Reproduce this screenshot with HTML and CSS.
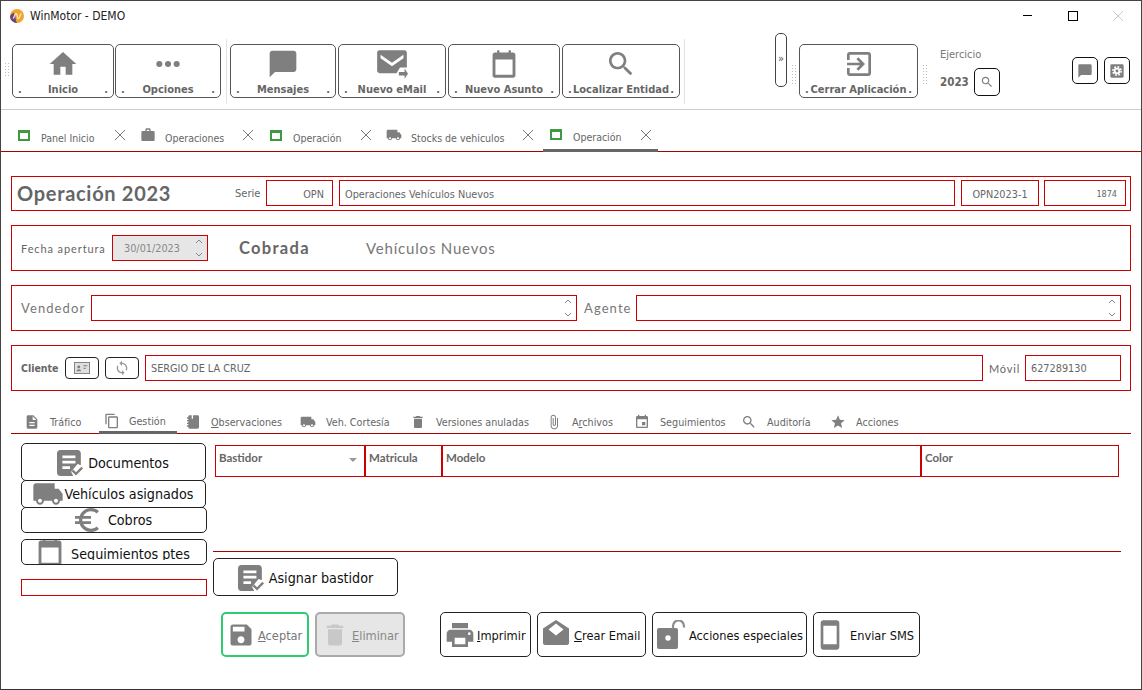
FILE: index.html
```html
<!DOCTYPE html>
<html lang="es">
<head>
    <meta charset="utf-8">
    <title>WinMotor - DEMO</title>
    <link rel="stylesheet" href="styles.css">
</head>
<body>
    <svg class="sprite" xmlns="http://www.w3.org/2000/svg">
        <symbol id="i-home" viewBox="0 0 24 24"><path d="M10 20v-6h4v6h5v-8h3L12 3 2 12h3v8z"/></symbol>
        <symbol id="i-dots" viewBox="0 0 24 24"><circle cx="5.500" cy="12" r="2.300"/><circle cx="12" cy="12" r="2.300"/><circle cx="18.500" cy="12" r="2.300"/></symbol>
        <symbol id="i-chat" viewBox="0 0 24 24"><path d="M20 2H4c-1.100 0-2 .9-2 2v18l4-4h14c1.100 0 2-.9 2-2V4c0-1.100-.9-2-2-2z"/></symbol>
        <symbol id="i-mail" viewBox="0 0 28 28"><path d="M3 2h22c1.100 0 2 .9 2 2v13h-6l-3 5H3c-1.100 0-2-.9-2-2V4c0-1.100.9-2 2-2zm11 11L4 6v3l10 7 10-7V6z"/><path d="M20 24h5v3l3-4.500L25 18v3h-5z"/></symbol>
        <symbol id="i-cal" viewBox="-2 -2 28 28"><path d="M6 0h2v2h8V0h2v2h2c1.100 0 2 .9 2 2v18c0 1.100-.9 2-2 2H4c-1.100 0-2-.9-2-2V4c0-1.100.9-2 2-2h2zM4.500 8v13.500h15V8z"/></symbol>
        <symbol id="i-search" viewBox="0 0 24 24"><path d="M15.500 14h-.79l-.28-.27C15.410 12.590 16 11.110 16 9.500 16 5.910 13.090 3 9.500 3S3 5.910 3 9.500 5.910 16 9.500 16c1.610 0 3.090-.59 4.230-1.570l.27.28v.79l5 4.990L20.490 19l-4.990-5zm-6 0C7.010 14 5 11.990 5 9.500S7.010 5 9.500 5 14 7.010 14 9.500 11.990 14 9.500 14z"/></symbol>
        <symbol id="i-exit" viewBox="0 0 24 24"><path d="M10.090 15.590L11.500 17l5-5-5-5-1.410 1.410L12.670 11H3v2h9.670l-2.580 2.590zM19 3H5c-1.110 0-2 .9-2 2v4h2V5h14v14H5v-4H3v4c0 1.100.89 2 2 2h14c1.100 0 2-.9 2-2V5c0-1.100-.9-2-2-2z"/></symbol>
        <symbol id="i-work" viewBox="0 0 24 24"><path d="M20 6h-4V4c0-1.110-.89-2-2-2h-4c-1.110 0-2 .89-2 2v2H4c-1.110 0-1.990.89-1.990 2L2 19c0 1.110.89 2 2 2h16c1.110 0 2-.89 2-2V8c0-1.110-.89-2-2-2zm-6 0h-4V4h4v2z"/></symbol>
        <symbol id="i-truck" viewBox="0 0 24 24"><path d="M20 8h-3V4H3c-1.100 0-2 .9-2 2v11h2c0 1.660 1.340 3 3 3s3-1.340 3-3h6c0 1.660 1.340 3 3 3s3-1.340 3-3h2v-5l-3-4zM6 18.500c-.83 0-1.500-.67-1.500-1.500s.67-1.500 1.500-1.500 1.500.67 1.500 1.500-.67 1.500-1.500 1.500zm12 0c-.83 0-1.500-.67-1.500-1.500s.67-1.500 1.500-1.500 1.500.67 1.500 1.500-.67 1.500-1.500 1.500z"/></symbol>
        <symbol id="i-file" viewBox="0 0 24 24"><path d="M14 2H6c-1.100 0-2 .9-2 2v16c0 1.100.9 2 2 2h12c1.100 0 2-.9 2-2V8l-6-6zm2 16H8v-2h8v2zm0-4H8v-2h8v2zm-3-5V3.500L18.500 9H13z"/></symbol>
        <symbol id="i-copy" viewBox="0 0 24 24"><path d="M16 1H4c-1.100 0-2 .9-2 2v14h2V3h12V1zm3 4H8c-1.100 0-2 .9-2 2v14c0 1.100.9 2 2 2h11c1.100 0 2-.9 2-2V7c0-1.100-.9-2-2-2zm0 16H8V7h11v14z"/></symbol>
        <symbol id="i-note" viewBox="0 0 24 24"><path d="M7 2h3v5h2V2h7c1.100 0 2 .9 2 2v16c0 1.100-.9 2-2 2H7c-1.100 0-2-.9-2-2v-1H3v-2h2v-2H3v-2h2v-2H3V9h2V7H3V5h2V4c0-1.100.9-2 2-2z"/></symbol>
        <symbol id="i-trash" viewBox="0 0 24 24"><path d="M6 19c0 1.100.9 2 2 2h8c1.100 0 2-.9 2-2V7H6v12zM19 4h-3.500l-1-1h-5l-1 1H5v2h14V4z"/></symbol>
        <symbol id="i-clip" viewBox="0 0 24 24"><path d="M16.500 6v11.500c0 2.210-1.790 4-4 4s-4-1.790-4-4V5c0-1.380 1.120-2.500 2.500-2.500s2.500 1.120 2.500 2.500v10.500c0 .55-.45 1-1 1s-1-.45-1-1V6H10v9.500c0 1.380 1.120 2.500 2.500 2.500s2.500-1.120 2.500-2.500V5c0-2.210-1.790-4-4-4S7 2.790 7 5v12.500c0 3.040 2.460 5.500 5.500 5.500s5.500-2.460 5.500-5.500V6h-1.500z"/></symbol>
        <symbol id="i-event" viewBox="0 0 24 24"><path d="M17 12h-5v5h5v-5zM16 1v2H8V1H6v2H5c-1.110 0-1.990.9-1.990 2L3 19c0 1.100.89 2 2 2h14c1.100 0 2-.9 2-2V5c0-1.100-.9-2-2-2h-1V1h-2zm3 18H5V8h14v11z"/></symbol>
        <symbol id="i-star" viewBox="0 0 24 24"><path d="M12 17.270L18.180 21l-1.640-7.030L22 9.240l-7.190-.61L12 2 9.190 8.630 2 9.240l5.460 4.730L5.820 21z"/></symbol>
        <symbol id="i-doc" viewBox="0 0 24 24"><path d="M3 0h16c1.700 0 3 1.300 3 3v11l-3-1-5 6-1 1 2 4H3c-1.700 0-3-1.300-3-3V3c0-1.700 1.300-3 3-3zm2 5v2.500h12V5zm0 5v2.500h12V10zm0 5v2.500h7V15z"/><path d="M13.500 19.500l1.500-1.500 2.500 2.500 5-5 1.500 1.500-6.500 6.500z"/></symbol>
        <symbol id="i-euro" viewBox="0 0 24 24"><path d="M15 18.500c-2.510 0-4.680-1.420-5.760-3.500H15v-2H8.580c-.05-.33-.08-.66-.08-1s.03-.67.08-1H15V9H9.240C10.320 6.920 12.500 5.500 15 5.500c1.610 0 3.090.59 4.230 1.570L21 5.300C19.410 3.870 17.300 3 15 3c-3.920 0-7.240 2.510-8.480 6H3v2h3.060c-.04.33-.06.66-.06 1s.2.670.06 1H3v2h3.520c1.240 3.490 4.560 6 8.480 6 2.310 0 4.410-.87 6-2.300l-1.780-1.770c-1.130.98-2.600 1.570-4.220 1.570z"/></symbol>
        <symbol id="i-save" viewBox="0 0 24 24"><path d="M17 3H5c-1.110 0-2 .9-2 2v14c0 1.100.89 2 2 2h14c1.100 0 2-.9 2-2V7l-4-4zm-5 16c-1.660 0-3-1.340-3-3s1.340-3 3-3 3 1.340 3 3-1.340 3-3 3zm3-10H5V5h10v4z"/></symbol>
        <symbol id="i-print" viewBox="0 0 24 24"><path d="M19 8H5c-1.660 0-3 1.340-3 3v6h4v4h12v-4h4v-6c0-1.660-1.340-3-3-3zm-3 11H8v-5h8v5zm3-7c-.55 0-1-.45-1-1s.45-1 1-1 1 .45 1 1-.45 1-1 1zm-1-9H6v4h12V3z"/></symbol>
        <symbol id="i-open" viewBox="0 0 30 30"><path fill-rule="evenodd" d="M15 0L28 8.500V23c0 1.100-.9 2-2 2H4c-1.100 0-2-.9-2-2V8.500zM15 3.500L7.500 9.500 15 15.500 22.500 9.500z"/></symbol>
        <symbol id="i-lock" viewBox="0 0 30 30"><rect x="1" y="8" width="21" height="21" rx="2"/><circle cx="12" cy="18" r="2.700" fill="#fff"/><path d="M17 9V6a5 5 0 0 1 11 0v1.500" fill="none" stroke="#8c8c8c" stroke-width="2.200"/></symbol>
        <symbol id="i-phone" viewBox="0 0 24 24"><path d="M17 1.010L7 1c-1.100 0-2 .9-2 2v18c0 1.100.9 2 2 2h10c1.100 0 2-.9 2-2V3c0-1.100-.9-1.990-2-1.990zM17 19H7V5h10v14z"/></symbol>
        <symbol id="i-card" viewBox="0 0 24 18"><rect x="0.700" y="0.700" width="22.600" height="16.600" fill="#e0e0e0" stroke="#7f7f7f" stroke-width="1.400"/><path d="M3.500 14c.3-2.200 1.600-3.200 3.700-3.200s3.400 1 3.700 3.200z"/><circle cx="7.200" cy="7.500" r="2.200"/><path d="M14 5h6v1.500h-6zm0 3.500h4V10h-4z"/></symbol>
        <symbol id="i-sync" viewBox="0 0 24 24"><path d="M12 4V1L8 5l4 4V6c3.310 0 6 2.690 6 6 0 1.010-.25 1.970-.7 2.800l1.460 1.460C19.540 15.030 20 13.570 20 12c0-4.420-3.580-8-8-8zm0 14c-3.310 0-6-2.690-6-6 0-1.010.25-1.970.7-2.800L5.240 7.740C4.460 8.970 4 10.430 4 12c0 4.420 3.580 8 8 8v3l4-4-4-4v3z"/></symbol>
        <symbol id="i-gear" viewBox="0 0 24 24"><rect x="2" y="2" width="20" height="20" rx="2"/><circle cx="12" cy="12" r="5" fill="#fff"/><circle cx="12" cy="12" r="6.200" fill="none" stroke="#fff" stroke-width="2.400" stroke-dasharray="2.600 2.270"/><circle cx="12" cy="12" r="2.200"/></symbol>
        <symbol id="i-x" viewBox="0 0 10 10"><path d="M0 0l10 10M10 0L0 10" fill="none" stroke="#777" stroke-width="1"/></symbol>
        <symbol id="i-spin" viewBox="0 0 10 20"><path d="M2 5l3-3 3 3M2 15l3 3 3-3" fill="none" stroke="#888" stroke-width="1"/></symbol>
    </svg>

    <div class="window">
        <div class="titlebar">
            <svg class="app-logo" viewBox="0 0 14 14"><circle cx="7" cy="7" r="7" fill="#f2a52e"/><path d="M0 7a7 7 0 0 0 7 7c-2-3-1-7-3-10.300A7 7 0 0 0 0 7z" fill="#5f4590"/><path d="M3 9.500c1.500-1 1.500-5 3-5s1 5 2.500 5 1.500-4 2.500-5" fill="none" stroke="#ffe9b8" stroke-width="1.300"/></svg>
            <span class="app-name">WinMotor - DEMO</span>
            <div class="win-controls">
                <span class="win-min"></span>
                <span class="win-max"></span>
                <svg class="win-close" viewBox="0 0 10 10"><path d="M0 0l10 10M10 0L0 10" stroke="#ccc" stroke-width="1"/></svg>
            </div>
        </div>

        <div class="toolbar">
            <span class="grip"></span>
            <div class="tool-group">
                <a class="tool w-inicio"><svg class="tool-icon"><use href="#i-home"/></svg><span class="tool-label"><i>.</i><b>Inicio</b><i>.</i></span></a>
                <a class="tool w-opciones"><svg class="tool-icon"><use href="#i-dots"/></svg><span class="tool-label"><i>.</i><b>Opciones</b><i>.</i></span></a>
            </div>
            <div class="tool-group">
                <a class="tool w-mensajes"><svg class="tool-icon"><use href="#i-chat"/></svg><span class="tool-label"><i>.</i><b>Mensajes</b><i>.</i></span></a>
                <a class="tool w-email"><svg class="tool-icon"><use href="#i-mail"/></svg><span class="tool-label"><i>.</i><b>Nuevo eMail</b><i>.</i></span></a>
                <a class="tool w-asunto"><svg class="tool-icon"><use href="#i-cal"/></svg><span class="tool-label"><i>.</i><b>Nuevo Asunto</b><i>.</i></span></a>
                <a class="tool w-localizar"><svg class="tool-icon"><use href="#i-search"/></svg><span class="tool-label"><i>.</i><b>Localizar Entidad</b><i>.</i></span></a>
            </div>
            <div class="more-btn">»</div>
            <span class="grip grip-b"></span>
            <a class="tool w-cerrar"><svg class="tool-icon"><use href="#i-exit"/></svg><span class="tool-label"><i>.</i><b>Cerrar Aplicación</b><i>.</i></span></a>
            <span class="grip grip-c"></span>
            <div class="ejercicio">
                <div class="ej-label">Ejercicio</div>
                <div class="ej-row">
                    <span class="ej-year">2023</span>
                    <span class="ej-search"><svg class="ico-14"><use href="#i-search"/></svg></span>
                </div>
            </div>
            <div class="side-btns">
                <span class="side-btn"><svg class="ico-16"><use href="#i-chat"/></svg></span>
                <span class="side-btn"><svg class="ico-16"><use href="#i-gear"/></svg></span>
            </div>
        </div>

        <div class="doc-tabs">
            <div class="doc-tab t1"><span class="green-box"></span><span class="doc-name">Panel Inicio</span><svg class="x"><use href="#i-x"/></svg></div>
            <div class="doc-tab t2"><svg class="ico-16"><use href="#i-work"/></svg><span class="doc-name">Operaciones</span><svg class="x"><use href="#i-x"/></svg></div>
            <div class="doc-tab t3"><span class="green-box"></span><span class="doc-name">Operación</span><svg class="x"><use href="#i-x"/></svg></div>
            <div class="doc-tab t4"><svg class="ico-16"><use href="#i-truck"/></svg><span class="doc-name">Stocks de vehiculos</span><svg class="x"><use href="#i-x"/></svg></div>
            <div class="doc-tab t5 active"><span class="green-box"></span><span class="doc-name">Operación</span><svg class="x"><use href="#i-x"/></svg></div>
        </div>

        <div class="form">
            <div class="panel panel-head">
                <h1>Operación 2023</h1>
                <span class="lbl-serie">Serie</span>
                <div class="field f-serie">OPN</div>
                <div class="field f-desc">Operaciones Vehículos Nuevos</div>
                <div class="field f-code">OPN2023-1</div>
                <div class="field f-num">1874</div>
            </div>

            <div class="panel panel-fecha">
                <span class="lbl-fecha">Fecha apertura</span>
                <div class="field f-fecha">30/01/2023<svg class="spin"><use href="#i-spin"/></svg></div>
                <span class="estado">Cobrada</span>
                <span class="tipo">Vehículos Nuevos</span>
            </div>

            <div class="panel panel-vend">
                <span class="lbl-big">Vendedor</span>
                <div class="field f-vend"><svg class="spin"><use href="#i-spin"/></svg></div>
                <span class="lbl-big lbl-agente">Agente</span>
                <div class="field f-agente"><svg class="spin"><use href="#i-spin"/></svg></div>
            </div>

            <div class="panel panel-cliente">
                <span class="lbl-cliente">Cliente</span>
                <span class="mini-btn"><svg class="ico-card"><use href="#i-card"/></svg></span>
                <span class="mini-btn mini-sync"><svg class="ico-16"><use href="#i-sync"/></svg></span>
                <div class="field f-cliente">SERGIO DE LA CRUZ</div>
                <span class="lbl-movil">Móvil</span>
                <div class="field f-movil">627289130</div>
            </div>

            <div class="sub-tabs">
                <div class="sub-tab s1"><svg class="ico-16"><use href="#i-file"/></svg><span>Tráfico</span></div>
                <div class="sub-tab s2 active"><svg class="ico-16"><use href="#i-copy"/></svg><span>Gestión</span></div>
                <div class="sub-tab s3"><svg class="ico-16"><use href="#i-note"/></svg><span><u>O</u>bservaciones</span></div>
                <div class="sub-tab s4"><svg class="ico-16"><use href="#i-truck"/></svg><span>Veh. Cortesía</span></div>
                <div class="sub-tab s5"><svg class="ico-16"><use href="#i-trash"/></svg><span>Versiones anuladas</span></div>
                <div class="sub-tab s6"><svg class="ico-16"><use href="#i-clip"/></svg><span>A<u>r</u>chivos</span></div>
                <div class="sub-tab s7"><svg class="ico-16"><use href="#i-event"/></svg><span>Seguimientos</span></div>
                <div class="sub-tab s8"><svg class="ico-16"><use href="#i-search"/></svg><span>Auditoría</span></div>
                <div class="sub-tab s9"><svg class="ico-16"><use href="#i-star"/></svg><span>Acciones</span></div>
            </div>

            <div class="gestion">
                <div class="side-col">
                    <a class="side-action a-doc"><svg class="ico-26"><use href="#i-doc"/></svg>Documentos</a>
                    <a class="side-action a-veh"><svg class="ico-32"><use href="#i-truck"/></svg>Vehículos asignados</a>
                    <a class="side-action a-cob"><svg class="ico-32"><use href="#i-euro"/></svg>Cobros</a>
                    <a class="side-action a-seg"><svg class="ico-32"><use href="#i-cal"/></svg><span class="seg-text">Seguimientos ptes</span></a>
                    <div class="side-empty"></div>
                </div>
                <div class="grid-col">
                    <div class="grid-head">
                        <div class="col c-bast">Bastidor<span class="caret"></span></div>
                        <div class="col c-mat">Matricula</div>
                        <div class="col c-mod">Modelo</div>
                        <div class="col c-color">Color</div>
                    </div>
                    <div class="grid-body"></div>
                    <a class="asignar"><svg class="ico-26"><use href="#i-doc"/></svg>Asignar bastidor</a>
                </div>
            </div>

            <div class="actions">
                <a class="act act-ok"><svg class="ico-28"><use href="#i-save"/></svg><span><u>A</u>ceptar</span></a>
                <a class="act act-del"><svg class="ico-28"><use href="#i-trash"/></svg><span><u>E</u>liminar</span></a>
                <a class="act act-print"><svg class="ico-32"><use href="#i-print"/></svg><span><u>I</u>mprimir</span></a>
                <a class="act act-mail"><svg class="ico-30"><use href="#i-open"/></svg><span><u>C</u>rear Email</span></a>
                <a class="act act-esp"><svg class="ico-30"><use href="#i-lock"/></svg><span>Acciones especiales</span></a>
                <a class="act act-sms"><svg class="ico-32"><use href="#i-phone"/></svg><span>Enviar SMS</span></a>
            </div>
        </div>
    </div>
</body>
</html>
```

FILE: styles.css
```css
* {
    box-sizing: border-box;
}

html, body {
    margin: 0;
    background-color: #ffffff;
}

body {
    font-family: "DejaVu Sans", Verdana, sans-serif;
    font-stretch: condensed;
    font-size: 11px;
    color: #666;
}

svg {
    fill: #7f7f7f;
    flex: none;
}

.sprite {
    display: none;
}

.ico-14 { width: 14px; height: 14px; }
.ico-16 { width: 16px; height: 16px; }
.ico-26 { width: 26px; height: 26px; }
.ico-28 { width: 28px; height: 28px; }
.ico-30 { width: 30px; height: 30px; }
.ico-32 { width: 32px; height: 32px; }
.ico-card { width: 16px; height: 12px; }

.window {
    width: 1142px;
    height: 690px;
    border: 1px solid #444;
    border-bottom-color: #333;
    overflow: hidden;
}

/* title bar */
.titlebar {
    height: 29px;
    display: flex;
    align-items: center;
    padding-left: 9px;
}

.app-logo {
    width: 14px;
    height: 14px;
}

.app-name {
    margin-left: 6px;
    font-size: 12px;
    color: #222;
}

.win-controls {
    margin-left: auto;
    display: flex;
    align-items: center;
    padding-right: 18px;
}

.win-min {
    width: 9px;
    height: 1px;
    background-color: #000;
}

.win-max {
    width: 10px;
    height: 10px;
    border: 1px solid #000;
    margin-left: 36px;
}

.win-close {
    width: 10px;
    height: 10px;
    margin-left: 35px;
}

/* ribbon */
.toolbar {
    height: 80px;
    display: flex;
    align-items: flex-start;
    position: relative;
    border-bottom: 1px solid #ccc;
}

.grip {
    width: 6px;
    height: 16px;
    margin: 32px 0 0 3px;
    background-image: radial-gradient(#bbb 0.6px, transparent 0.8px);
    background-size: 3px 3px;
}

.tool-group {
    display: flex;
    gap: 2px;
    height: 65px;
    margin-top: 9px;
    padding: 5px 4px 0 0;
    border-right: 1px solid #e2e2e2;
    margin-right: 3px;
}

.tool-group:first-of-type {
    margin-left: 2px;
    padding-right: 5px;
}

.tool {
    height: 54px;
    border: 1px solid #555;
    border-radius: 5px;
    display: flex;
    flex-direction: column;
    align-items: center;
    padding: 3px 3px 0;
}

.tool-icon {
    width: 32px;
    height: 32px;
}

.tool-label {
    width: 100%;
    display: flex;
    justify-content: space-between;
    color: #666;
    font-weight: bold;
    font-size: 11px;
    line-height: 14px;
    margin-top: 3px;
    padding: 0 2px;
}

.tool-label i {
    font-style: normal;
}

.tool-label b {
    white-space: nowrap;
}

.w-inicio { width: 102px; }
.w-opciones { width: 106px; margin-left: -1px; }
.w-mensajes { width: 106px; }
.w-email { width: 108px; }
.w-asunto { width: 112px; }
.w-localizar { width: 118px; }
.w-cerrar { width: 119px; margin-top: 14px; }

.more-btn {
    width: 12px;
    height: 54px;
    margin: 3px 0 0 87px;
    border: 1px solid #444;
    border-radius: 5px;
    font-size: 11px;
    line-height: 50px;
    text-align: center;
    color: #555;
}

.grip-b {
    margin: 34px 2px 0 4px;
    height: 22px;
}

.grip-c {
    margin: 34px 0 0 4px;
    height: 22px;
}

.ejercicio {
    margin: 18px 0 0 12px;
    width: 60px;
}

.ej-label {
    font-size: 11px;
    line-height: 14px;
    color: #777;
}

.ej-row {
    display: flex;
    align-items: center;
    margin-top: 6px;
}

.ej-year {
    font-weight: bold;
    color: #666;
    font-size: 11.500px;
    width: 34px;
}

.ej-search {
    width: 26px;
    height: 28px;
    border: 1px solid #111;
    border-radius: 5px;
    display: flex;
    align-items: center;
    justify-content: center;
}

.side-btns {
    display: flex;
    gap: 6px;
    margin: 27px 0 0 72px;
}

.side-btn {
    width: 26px;
    height: 27px;
    border: 1px solid #111;
    border-radius: 5px;
    display: flex;
    align-items: center;
    justify-content: center;
}

/* open documents */
.doc-tabs {
    height: 42px;
    display: flex;
    align-items: flex-end;
    border-bottom: 1px solid #a00;
    padding-left: 10px;
}

.doc-tab {
    height: 26px;
    display: flex;
    align-items: flex-start;
    font-size: 10.500px;
    color: #666;
    margin-bottom: -1px;
}

.green-box {
    width: 12px;
    height: 11px;
    border: 2px solid #3f9a3f;
    border-top-width: 3px;
    margin-top: 4px;
    flex: none;
}

.doc-name {
    margin-left: 11px;
    margin-top: 6px;
    white-space: nowrap;
}

.doc-tab svg {
    margin-top: 1px;
}

.doc-tab svg + .doc-name {
    margin-left: 9px;
}

.doc-tab .x {
    width: 10px;
    height: 10px;
    margin-top: 4px;
    margin-left: auto;
}

.t1 { width: 123px; padding: 0 9px 0 7px; }
.t2 { width: 130px; padding: 0 11px 0 6px; }
.t3 { width: 116px; padding: 0 9px 0 6px; }
.t4 { width: 163px; padding: 0 10px 0 6px; }
.t5 { width: 115px; padding: 0 7px; }

.t5 .green-box { margin-top: 3px; }
.t5 .doc-name { margin-top: 5px; }

.active {
    border-bottom: 3px solid #666;
}

/* form */
.form {
    padding: 24px 10px 0;
}

.panel {
    border: 1px solid #c00;
    display: flex;
    align-items: center;
    margin-bottom: 14px;
}

.field {
    height: 26px;
    border: 1px solid #c00;
    display: flex;
    align-items: center;
    font-size: 10.800px;
    padding: 0 5px;
    color: #666;
    white-space: nowrap;
    position: relative;
}

.spin {
    position: absolute;
    right: 3px;
    top: 2px;
    width: 10px;
    height: 20px;
}

.panel-head {
    height: 35px;
    padding-left: 5px;
}

.panel-head .field {
    margin-top: -1px;
    padding-top: 2px;
}

h1 {
    width: 218px;
    margin: -2px 0 0;
    font-family: "Lato", sans-serif;
    font-size: 20px;
    font-weight: bold;
    color: #666;
    letter-spacing: 0.7px;
}

.lbl-serie {
    width: 31px;
    font-size: 11px;
}

.f-serie { width: 67px; justify-content: flex-end; padding-right: 8px; }
.f-desc { width: 616px; margin-left: 6px; }
.f-code { width: 78px; margin-left: 6px; justify-content: center; }
.f-num { width: 82px; margin-left: 5px; justify-content: flex-end; padding-right: 8px; font-size: 9px; }

.panel-fecha {
    height: 46px;
    padding-left: 9px;
}

.lbl-fecha {
    font-family: "Lato", sans-serif;
    width: 91px;
    font-size: 11px;
    letter-spacing: 0.9px;
    white-space: nowrap;
}

.f-fecha {
    width: 96px;
    background-color: #e6e6e6;
    color: #888;
    padding-left: 11px;
    height: 26px;
}

.estado {
    font-family: "Lato", sans-serif;
    font-weight: bold;
    font-size: 16.500px;
    letter-spacing: 1.300px;
    margin-left: 31px;
    width: 127px;
}

.tipo {
    font-family: "Lato", sans-serif;
    font-size: 15px;
    letter-spacing: 0.8px;
    color: #777;
}

.panel-vend {
    height: 46px;
    padding-left: 9px;
}

.lbl-big {
    font-family: "Lato", sans-serif;
    font-size: 13px;
    letter-spacing: 1.100px;
    color: #777;
    width: 70px;
}

.f-vend { width: 486px; }
.lbl-agente { width: 52px; margin-left: 7px; }
.f-agente { width: 485px; }

.panel-cliente {
    height: 46px;
    padding-left: 9px;
}

.lbl-cliente {
    font-weight: bold;
    font-size: 10.500px;
    width: 44px;
}

.mini-btn {
    width: 34px;
    height: 22px;
    border: 1px solid #222;
    border-radius: 4px;
    display: flex;
    align-items: center;
    justify-content: center;
    margin-right: 6px;
}

.mini-sync svg {
    fill: #999;
}

.f-cliente { width: 838px; }

.lbl-movil {
    font-family: "Lato", sans-serif;
    font-size: 11px;
    letter-spacing: 0.8px;
    margin-left: 6px;
    width: 36px;
}

.f-movil { width: 96px; }

/* inner tabs */
.sub-tabs {
    display: flex;
    height: 24px;
    margin-top: 19px;
    border-bottom: 1px solid #a00;
    padding-left: 8px;
}

.sub-tab {
    display: flex;
    align-items: center;
    gap: 10px;
    font-size: 10.700px;
    height: 23px;
    padding-left: 5px;
    white-space: nowrap;
}

.sub-tab span {
    margin-top: 1px;
}

.sub-tab.active {
    height: 24px;
    border-bottom: 3px solid #666;
}

.s1 { width: 80px; }
.s2 { width: 78px; gap: 9px; }
.s3 { width: 115px; margin-left: 3px; }
.s4 { width: 110px; }
.s5 { width: 136px; }
.s6 { width: 88px; }
.s7 { width: 107px; }
.s8 { width: 89px; }
.s9 { width: 100px; }

/* gestion */
.gestion {
    display: flex;
    margin-top: 9px;
    height: 163px;
}

.side-col {
    width: 186px;
    margin-left: 10px;
}

.side-action {
    display: flex;
    align-items: center;
    justify-content: center;
    gap: 5px;
    border: 1px solid #222;
    border-radius: 5px;
    background-color: #fff;
    color: #111;
    font-size: 14.200px;
    overflow: hidden;
    position: relative;
    white-space: nowrap;
}

.a-doc { height: 38px; width: 185px; padding: 2px 1px 0 0; }
.a-veh { height: 28px; width: 185px; margin-top: -1px; gap: 1px; padding-right: 2px; }
.a-cob { height: 26px; margin-top: -1px; padding-right: 5px; }
.a-seg { height: 26px; margin-top: 6px; padding-right: 4px; }

/* the label of this button is cut off at the bottom */
.seg-text {
    height: 13px;
    line-height: 15px;
    overflow: hidden;
    margin-top: 2px;
}

.side-empty {
    height: 17px;
    margin-top: 14px;
    border: 1px solid #c00;
}

.grid-col {
    width: 908px;
    margin-left: 6px;
    padding-top: 2px;
}

.grid-head {
    display: flex;
    margin-left: 2px;
    width: 904px;
    height: 32px;
}

.col {
    border: 1px solid #c00;
    font-family: "Lato", sans-serif;
    font-weight: bold;
    font-size: 11.500px;
    color: #666;
    padding: 5px 3px;
    position: relative;
}

.c-bast { width: 150px; }
.c-mat { width: 77px; }
.c-mod { width: 479px; }
.c-color { width: 198px; }

.caret {
    position: absolute;
    right: 7px;
    top: 12px;
    border: 4px solid transparent;
    border-top-color: #999;
}

.grid-body {
    height: 75px;
    border-bottom: 1px solid #a00;
}

.asignar {
    display: flex;
    align-items: center;
    justify-content: center;
    gap: 5px;
    width: 185px;
    height: 38px;
    margin-top: 6px;
    padding-top: 2px;
    border: 1px solid #222;
    border-radius: 5px;
    font-size: 14.200px;
    color: #111;
}

/* bottom buttons */
.actions {
    display: flex;
    margin-top: 6px;
    padding-left: 210px;
}

.act {
    height: 45px;
    display: flex;
    align-items: center;
    border: 1px solid #222;
    border-radius: 5px;
    font-size: 12.700px;
    color: #111;
    white-space: nowrap;
    padding-left: 3px;
    gap: 3px;
}

.act span {
    margin-top: 2px;
}

.act-ok { width: 88px; border: 2px solid #2ecc71; color: #888; padding-left: 4px; }
.act-ok span { color: #777; }
.act-del { width: 90px; margin-left: 6px; border: 2px solid #aaa; background-color: #e6e6e6; color: #888; padding-left: 4px; }
.act-del svg { fill: #c8c8c8; }
.act-print { width: 91px; margin-left: 35px; gap: 1px; }
.act-mail { width: 109px; margin-left: 6px; }
.act-esp { width: 155px; margin-left: 6px; }
.act-sms { width: 107px; margin-left: 6px; padding-left: 0; gap: 4px; }
```
